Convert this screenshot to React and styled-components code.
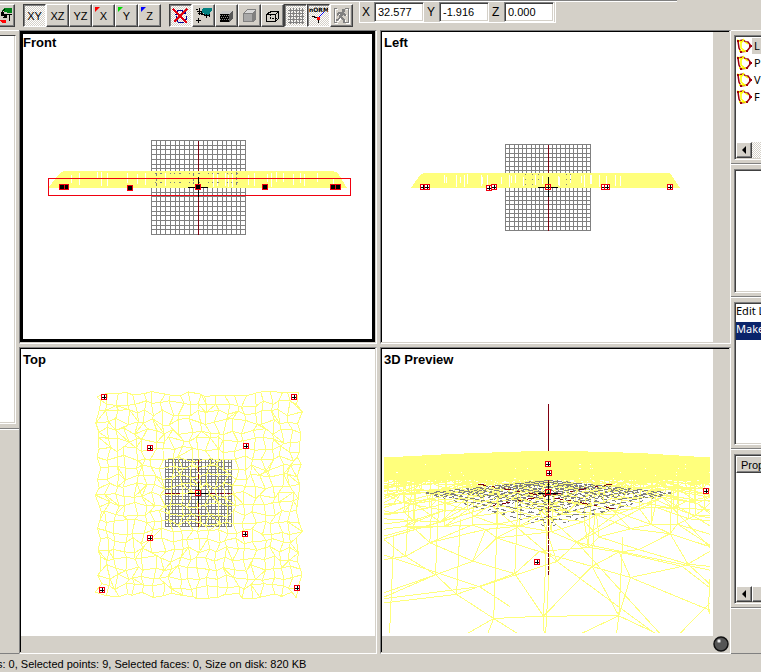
import React from "react";
import styled, { createGlobalStyle, css } from "styled-components";

const FACE = "#d4d0c8";
const DARK = "#808080";
const YELLOW = "#ffff7c";
const RED = "#f00010";
const MAROON = "#800010";
const UI_FONT = `"Noto Sans", "DejaVu Sans Condensed", sans-serif`;

const GlobalStyle = createGlobalStyle`
  * { box-sizing: border-box; }
  html, body, #root { height: 100%; margin: 0; }
  body {
    background: ${FACE};
    color: #000;
    font: 11px/14px "Liberation Sans", Arial, sans-serif;
    overflow: hidden;
  }
  svg { display: block; }
`;

const dither = css`
  background: repeating-conic-gradient(#fff 0 25%, ${FACE} 0 50%) 0 0 / 2px 2px;
`;

const sunken = css`
  border: 1px solid;
  border-color: ${DARK} #fff #fff ${DARK};
  box-shadow: inset 1px 1px 0 #404040, inset -1px -1px 0 ${FACE};
`;

const raised = css`
  border: 1px solid;
  border-color: #fff #404040 #404040 #fff;
  box-shadow: inset -1px -1px 0 ${DARK};
`;

const Window = styled.div`
  height: 100vh;
  display: grid;
  grid-template-rows: 30px minmax(0, 1fr) 18px;
  background: ${FACE};
  overflow: hidden;
`;

const Toolbar = styled.header`
  position: relative;
  display: flex;
  align-items: flex-start;
  min-width: 0;
  overflow: hidden;
  &::before {
    content: "";
    position: absolute;
    inset: 0 11% auto 0;
    height: 2px;
    background: linear-gradient(${DARK} 50%, #fff 50%);
  }
`;

const ToolGroup = styled.div`
  display: flex;
  margin: 4px 8px 0 0;
  flex: none;
`;

const LeadingGroup = styled(ToolGroup)`
  margin-left: -8px;
`;

const ToolButton = styled.button`
  position: relative;
  width: 23px;
  height: 23px;
  padding: 0;
  display: grid;
  place-items: center;
  font: 11px/14px "Liberation Sans", Arial, sans-serif;
  color: #000;
  background: ${FACE};
  ${raised}
  ${(p) =>
    p.$pressed &&
    css`
      ${dither}
      border-color: #404040 #fff #fff #404040;
      box-shadow: inset 1px 1px 0 ${DARK};
    `}
  ${(p) =>
    p.$flag &&
    css`
      &::before {
        content: "";
        position: absolute;
        left: 2px;
        top: 2px;
        width: 5px;
        height: 5px;
        background: ${p.$flag};
        clip-path: polygon(0 0, 100% 0, 0 100%);
      }
    `}
`;

const Coordinates = styled.form`
  display: flex;
  height: 21px;
  margin: 2px 0 0 -2px;
  border-left: 1px solid #fff;
  border-right: 1px solid #fff;
  border-bottom: 1px solid #fff;
`;

const CoordField = styled.div`
  display: flex;
`;

const CoordLabel = styled.label`
  width: 14px;
  padding-left: 2px;
  font: 12px/20px "Liberation Sans", Arial, sans-serif;
`;

const CoordInput = styled.input`
  width: 50px;
  height: 20px;
  margin-right: 1px;
  padding: 0 3px;
  font: 11px/16px "Liberation Sans", Arial, sans-serif;
  color: #000;
  background: #fff;
  border-radius: 0;
  outline: none;
  ${sunken}
`;

const Main = styled.main`
  display: grid;
  grid-template-columns: 19px minmax(0, 1fr) 30px;
  min-height: 0;
`;

const LeftDock = styled.aside`
  display: grid;
  grid-template-rows: 399fr 225fr;
  min-height: 0;
`;

const DockSection = styled.section`
  min-height: 0;
  display: flex;
  flex-direction: column;
  padding: 4px 3px 4px 0;
  border-top: 1px solid #fff;
  border-bottom: 1px solid ${DARK};
`;

const TreeBox = styled.div`
  flex: 1;
  background: #fff;
  border-style: solid;
  border-width: 1px 1px 1px 0;
  border-color: #404040 #fff #fff;
  box-shadow: inset -1px -1px 0 ${FACE};
`;

const Views = styled.div`
  display: grid;
  grid-template-columns: 358fr 351fr;
  grid-template-rows: 314fr 307fr;
  gap: 3px;
  min-width: 0;
  min-height: 0;
`;

const ViewFrame = styled.section`
  min-width: 0;
  min-height: 0;
  border: 1px solid;
  border-color: ${DARK} #fff #fff ${DARK};
`;

const ViewBody = styled.div`
  position: relative;
  height: calc(100% - 1px);
  display: grid;
  grid-template-columns: minmax(0, 1fr) auto;
  grid-template-rows: minmax(0, 1fr) auto;
  background: ${FACE};
  border: solid #000;
  border-width: ${(p) => (p.$active ? "3px" : "1px 0 0 1px")};
  margin-right: 1px;
`;

const ViewTitle = styled.h2`
  position: absolute;
  left: ${(p) => (p.$active ? 0 : 2)}px;
  top: ${(p) => (p.$active ? 1 : 3)}px;
  margin: 0;
  font: bold 13px/16px "Liberation Sans", Arial, sans-serif;
`;

const Canvas = styled.svg`
  grid-area: 1 / 1;
  width: 100%;
  height: 100%;
  min-width: 0;
  min-height: 0;
  background: #fff;
  overflow: hidden;
`;

const SideGutter = styled.div`
  grid-area: 1 / 2;
  width: 16px;
`;

const BottomGutter = styled.div`
  grid-area: 2 / 1;
  height: 16px;
`;

const OrbitButton = styled.button`
  grid-area: 2 / 2;
  width: 16px;
  height: 16px;
  padding: 0;
  border: 0;
  background: none;
`;

const RightDock = styled.aside`
  display: grid;
  grid-template-rows: 134fr 133fr 152fr 159fr 46fr;
  min-height: 0;
  overflow: hidden;
`;

const Panel = styled.section`
  min-width: 0;
  min-height: 0;
  display: flex;
  flex-direction: column;
  padding: 4px 0 3px 3px;
  border-top: 1px solid #fff;
  border-bottom: 1px solid ${DARK};
  overflow: hidden;
`;

const Well = styled.div`
  flex: 1;
  min-height: 0;
  width: 120px;
  display: flex;
  flex-direction: column;
  padding: 1px;
  background: #fff;
  ${sunken}
`;

const List = styled.ul`
  flex: 1;
  margin: 0;
  padding: 0;
  list-style: none;
  font: 11px/17px ${UI_FONT};
`;

const ListItem = styled.li`
  display: flex;
  align-items: center;
  height: 17px;
`;

const ItemText = styled.span`
  padding: 0 2px;
  line-height: 16px;
  background: ${(p) => (p.$selected ? FACE : "transparent")};
`;

const HistoryItem = styled.li`
  height: 18px;
  line-height: 14px;
  color: ${(p) => (p.$selected ? "#fff" : "#000")};
  background: ${(p) => (p.$selected ? "#0a246a" : "transparent")};
`;

const ScrollRow = styled.div`
  display: flex;
  height: 16px;
  ${dither}
`;

const ScrollButton = styled.button`
  width: 16px;
  height: 16px;
  padding: 0;
  display: grid;
  place-items: center;
  background: ${FACE};
  ${raised}
`;

const Thumb = styled.div`
  width: 40px;
  background: ${FACE};
  ${raised}
`;

const ColumnHeader = styled.button`
  flex: none;
  height: 17px;
  padding: 0 4px;
  text-align: left;
  font: 11px/14px "Liberation Sans", Arial, sans-serif;
  background: ${FACE};
  ${raised}
`;

const StatusBar = styled.footer`
  padding: 3px 0 0;
  font: 11px/14px "Liberation Sans", Arial, sans-serif;
  white-space: nowrap;
  display: flex;
  overflow: hidden;
`;

const StatusText = styled.span`
  margin-left: -3px;
`;

/* ---------- geometry ---------- */

function seeded(seed) {
  let s = seed;
  return () => {
    s = (s * 1664525 + 1013904223) % 4294967296;
    return s / 4294967296;
  };
}

function gridPath(x0, y0, x1, y1, n) {
  let d = "";
  for (let i = 0; i <= n; i++) {
    const x = Math.round(x0 + ((x1 - x0) * i) / n) + 0.5;
    const y = Math.round(y0 + ((y1 - y0) * i) / n) + 0.5;
    d += `M${x} ${y0}V${y1 + 1}M${x0} ${y}H${x1 + 1}`;
  }
  return d;
}

function topMesh() {
  const rnd = seeded(17);
  const n = 22;
  const pts = [];
  for (let j = 0; j <= n; j++) {
    const row = [];
    for (let i = 0; i <= n; i++) {
      row.push([
        98.5 + (i * 201) / n + (rnd() - 0.5) * 7,
        394.5 + (j * 201) / n + (rnd() - 0.5) * 7,
      ]);
    }
    pts.push(row);
  }
  let d = "";
  const seg = (a, b) => {
    d += `M${a[0].toFixed(1)} ${a[1].toFixed(1)}L${b[0].toFixed(1)} ${b[1].toFixed(1)}`;
  };
  for (let j = 0; j <= n; j++)
    for (let i = 0; i <= n; i++) {
      if (i < n) seg(pts[j][i], pts[j][i + 1]);
      if (j < n) seg(pts[j][i], pts[j + 1][i]);
      if (i < n && j < n && rnd() < 0.14) seg(pts[j][i], pts[j + 1][i + 1]);
      if (i > 0 && j < n && rnd() < 0.08) seg(pts[j][i], pts[j + 1][i - 1]);
    }
  return d;
}

const CX = 548.5;
const HORIZON = 451;
const FOCAL = 275;
const NEAR = 0.1;

function projectLine(a, b) {
  let [p, q] = a[1] > b[1] ? [a, b] : [b, a];
  if (p[1] < NEAR) return "";
  if (q[1] < NEAR) {
    const t = (p[1] - NEAR) / (p[1] - q[1]);
    q = p.map((v, k) => v + (q[k] - v) * t);
  }
  const s = (v) =>
    `${(CX + (FOCAL * v[0]) / v[1]).toFixed(1)} ${(HORIZON + v[2] / v[1]).toFixed(1)}`;
  return `M${s(p)}L${s(q)}`;
}

function perspectiveMesh() {
  const rnd = seeded(5);
  const n = 25;
  const half = 0.316 * 3.05;
  const layer = (k, wobble) => {
    const pts = [];
    for (let j = 0; j <= n; j++) {
      const row = [];
      for (let i = 0; i <= n; i++) {
        const u = -half + (2 * half * i) / n + (rnd() - 0.5) * 0.05;
        const v = -half + (2 * half * j) / n + (rnd() - 0.5) * 0.05;
        row.push([(u - v) * 0.707, 1 + (u + v) * 0.707, k + (rnd() - 0.5) * wobble]);
      }
      pts.push(row);
    }
    return pts;
  };
  const low = layer(42, 6);
  const high = layer(18, 14);
  let d = "";
  for (let j = 0; j <= n; j++)
    for (let i = 0; i <= n; i++) {
      for (const L of [low, high]) {
        if (i < n) d += projectLine(L[j][i], L[j][i + 1]);
        if (j < n) d += projectLine(L[j][i], L[j + 1][i]);
        if (i < n && j < n && rnd() < 0.45) d += projectLine(L[j][i], L[j + 1][i + 1]);
      }
      const base = low[j][i];
      if (base[1] > 0.18 && rnd() < 0.75)
        d += projectLine(base, [base[0] + 0.004, base[1] + 0.001, high[j][i][2]]);
    }
  return d;
}

function perspectiveGrid() {
  let d = "";
  const h = 0.316;
  for (let i = 0; i <= 20; i++) {
    const t = -h + (2 * h * i) / 20;
    const at = (u, v) => [(u - v) * 0.707, 1 + (u + v) * 0.707, 42];
    d += projectLine(at(t, -h), at(t, h)) + projectLine(at(-h, t), at(h, t));
  }
  return d;
}

function slits(seed, x0, x1, y0, y1, count) {
  const rnd = seeded(seed);
  let d = "";
  for (let i = 0; i < count; i++) {
    const x = Math.round(x0 + rnd() * (x1 - x0)) + 0.5;
    const a = Math.round(y0 + rnd() * 3);
    d += `M${x} ${a}V${Math.round(y1 - rnd() * 5)}`;
  }
  return d;
}

const TOP_MESH = topMesh();
const PERSPECTIVE_MESH = perspectiveMesh();
const PERSPECTIVE_GRID = perspectiveGrid();

function Marker({ x, y, solid, bare }) {
  return (
    <g>
      <rect x={x - 2.5} y={y - 2.5} width="5" height="5" fill={solid ? "#000" : bare ? "none" : "#fff"} stroke={RED} />
      {!solid && !bare && <path d={`M${x - 2} ${y + 0.5}H${x + 2}M${x + 0.5} ${y - 2}V${y + 2}`} stroke="#000" />}
    </g>
  );
}

function Cross({ x, y }) {
  return <path d={`M${x - 10} ${y + 0.5}H${x + 10}M${x + 0.5} ${y - 10}V${y + 10}`} stroke="#000" />;
}

function FrontScene() {
  return (
    <Canvas viewBox="23 34 349 305" shapeRendering="crispEdges" fill="none">
      <path d={gridPath(151, 140, 245, 234, 20)} stroke={DARK} />
      <path d="M198.500 141V235" stroke={MAROON} />
      <path d="M48 188L60 173L64 171H333L338 173L347 188Z" fill={YELLOW} />
      <path d="M71.500 175V183M79.500 173V185M97.500 172V179M101.500 172V186M107.500 173V186M127.500 173V183M137.500 174V184M145.500 173V185M165.500 173V186M213.500 173V187M217.500 174V186M225.500 173V186M228.500 175V187M232.500 174V187M248.500 175V185M254.500 173V186M267.500 174V182M271.500 173V187M276.500 172V182M283.500 173V182M293.500 174V185M300.500 173V183M304.500 174V186M317.500 173V182M333.500 179V184" stroke="#fff" />
      <path d="M156.500 173V196M193.500 173V184M236.500 172V186" stroke={DARK} strokeDasharray="3 2" />
      <path d="M155 173.500H244M155 182.500H244" stroke={DARK} strokeDasharray="1 4 2 8 1 3" />
      <rect x="48.500" y="178.500" width="302" height="17" stroke={RED} />
      <Cross x={198} y={187} />
      {[66, 62, 130, 198, 265, 333, 338].map((x) => (
        <Marker key={x} x={x} y={x === 130 ? 188 : 187} solid />
      ))}
    </Canvas>
  );
}

function LeftScene() {
  return (
    <Canvas viewBox="382 32 331 310" shapeRendering="crispEdges" fill="none">
      <path d={gridPath(505, 144, 590, 230, 20)} stroke={DARK} />
      <path d="M548.500 145V231" stroke={MAROON} />
      <path d="M411 188L420 175L424 173H670L680 188Z" fill={YELLOW} />
      <path d={slits(21, 430, 665, 174, 187, 30)} stroke="#fff" />
      <path d="M525.500 174V186M532.500 174V186M538.500 174V180M566.500 174V186M570.500 174V180" stroke={DARK} strokeDasharray="1 4" />
      <Cross x={548} y={187} />
      {[[423, 187], [427, 187], [489, 188], [494, 187], [604, 187], [607, 187], [670, 187]].map(([x, y]) => (
        <Marker key={x} x={x} y={y} />
      ))}
      <Marker x={548} y={187} bare />
    </Canvas>
  );
}

function TopScene() {
  return (
    <Canvas viewBox="21 349 354 287" shapeRendering="crispEdges" fill="none">
      <path d={gridPath(165, 459, 231, 526, 20)} stroke={DARK} />
      <path d="M165 493.500H232" stroke={MAROON} strokeDasharray="6 1 3 1" />
      <path d={TOP_MESH} stroke={YELLOW} />
      <path d="M198.500 460V527" stroke={MAROON} strokeDasharray="5 2" />
      <Cross x={198} y={493} />
      {[[104, 397], [294, 397], [150, 448], [246, 446], [150, 538], [245, 534], [102, 590], [297, 588]].map(([x, y]) => (
        <Marker key={`${x}-${y}`} x={x} y={y} />
      ))}
      <Marker x={198} y={493} bare />
    </Canvas>
  );
}

function PreviewScene() {
  return (
    <Canvas viewBox="382 349 331 287" shapeRendering="crispEdges" fill="none">
      <defs>
        <clipPath id="frustum">
          <rect x="384" y="380" width="326" height="253" />
        </clipPath>
      </defs>
      <path d="M548.500 404V452" stroke={MAROON} />
      <g clipPath="url(#frustum)">
        <path d="M384 457.500L450 454L535 451H570L640 453L710 457.500V480H384Z" fill={YELLOW} />
        <path d="M384 464.500H710M384 468.500H710M384 472.500H710M384 475.500H710M384 478.500H710" stroke="#fff" strokeDasharray="2 9 4 17 3 6 1 23" />
        <path d={PERSPECTIVE_MESH} stroke={YELLOW} />
      </g>
      <path d={PERSPECTIVE_GRID} stroke={DARK} strokeDasharray="3 6 5 4 2 9 4 7" />
      <path d="M478 484L620 510M612 484L484 507" stroke={MAROON} strokeDasharray="8 6 3 9" />
      <path d="M548.500 480V575" stroke={MAROON} strokeDasharray="7 1 4 1" />
      <Cross x={548} y={493} />
      <Marker x={548} y={464} />
      <Marker x={549} y={473} />
      <Marker x={706} y={491} />
      <Marker x={537} y={562} />
      <Marker x={548} y={492} bare />
    </Canvas>
  );
}

/* ---------- icons ---------- */

const Icon = styled.svg`
  width: 19px;
  height: 19px;
  shape-rendering: crispEdges;
  fill: none;
`;

const NormText = styled.text`
  font: bold 6px "DejaVu Sans", sans-serif;
  fill: #000;
`;

const icons = {
  material: (
    <Icon viewBox="0 0 19 19">
      <path d="M10 2H18V7H14L8 5Z" fill="#008018" />
      <path d="M7 7L11 3M9 8H13M15.500 8V15M13 8.500H18M9 11.500H13" stroke="#000" strokeWidth="1" />
      <path d="M7 6H10V9H13V12H10V10H7Z" fill="#000" />
      <path d="M6 14H12V17H8Z" fill="#f00" />
    </Icon>
  ),
  noRotate: (
    <Icon viewBox="0 0 19 19">
      <path d="M6.500 8V4.500H11L13 7M5.500 10V14L7.500 16.500H12.500L15.500 13V10M4 8.500H8M11 7.500H14.500V4" stroke="#000098" />
      <path d="M2 3L16 17M16 3L3 16" stroke="#e00010" strokeWidth="2" />
    </Icon>
  ),
  camera: (
    <Icon viewBox="0 0 19 19">
      <path d="M9 2H18V4L14 10L7 6Z" fill="#008080" />
      <path d="M2 3.500H4M3 5.500H8M4 7.500H7M5.500 2V9M10 9.500H16M12.500 8V12M15.500 8V11M2 14.500H7M4.500 12V17" stroke="#000" />
      <path d="M7 6L12 9L11 10L6 8Z" fill="#000" />
    </Icon>
  ),
  textured: (
    <Icon viewBox="0 0 19 19">
      <path d="M3 7L6 5H16L13 8H3Z" fill="#c8c8c8" />
      <path d="M3 8H12V16H3Z" fill="#000" />
      <path d="M12 8L16 5V13L12 16Z" fill="#585858" />
      <path d="M3 9.500H12M4 11.500H12M3 13.500H12" stroke="#888" strokeDasharray="1 1" />
    </Icon>
  ),
  shaded: (
    <Icon viewBox="0 0 19 19">
      <path d="M3 7L7 3H16V13L13 16H3Z" fill="#808080" />
      <path d="M4 7L7 4H15L12 7Z" fill="#d8d8d8" />
      <path d="M4 8H12V15H4Z" fill="#a8a8a8" />
    </Icon>
  ),
  wire: (
    <Icon viewBox="0 0 19 19">
      <path d="M3.500 8.500H12.500V15.500H3.500ZM7.500 5.500H15.500V12.500L12.500 15.500M3.500 8.500L7.500 5.500M12.500 8.500L15.500 5.500" stroke="#000" />
      <path d="M7.500 5V12.500H15" stroke="#000" strokeDasharray="2 1" />
    </Icon>
  ),
  grid: (
    <Icon viewBox="0 0 19 19">
      <path d="M4.500 2V18M7.500 2V18M10.500 2V18M13.500 2V18M16.500 2V18M2 4.500H18M2 7.500H18M2 10.500H18M2 13.500H18M2 16.500H18" stroke="#808080" />
    </Icon>
  ),
  normals: (
    <Icon viewBox="0 0 19 19">
      <NormText x="0" y="6" aria-hidden="true">nORM</NormText>
      <path d="M9 12L15 6" stroke="#0000f0" />
      <path d="M8 12L3 10M9.500 13V17" stroke="#000" />
      <path d="M8 11H11V14H8Z" fill="#f00" />
    </Icon>
  ),
  run: (
    <Icon viewBox="0 0 19 19">
      <path d="M6 3.500H3.500V17.500H6M14 3.500H17.500V17.500H14M12 4V6M6 8H12L15 10M11 8L9 12L13 14V17M9 12L7 15H5" stroke="#fff" />
      <path d="M5 2.500H2.500V16.500H5M13 2.500H16.500V16.500H13" stroke="#808080" />
      <path d="M10 3H13V6H10ZM6 6H11L14 9V10H12L11 9L10 11L13 13V17H11V14L8 12L6 15H4V13H6L8 8H7L5 10V8Z" fill="#808080" />
    </Icon>
  ),
};

const ShapeIcon = styled.svg`
  flex: none;
  width: 16px;
  height: 16px;
  fill: none;
`;

function PolygonIcon() {
  return (
    <ShapeIcon viewBox="0 0 16 16">
      <path d="M2 3L7 2L10 4H12L15 8L11 13L5 14L3 10Z" fill="#fff" stroke="#a00010" strokeWidth="1.500" />
      <path d="M1 2L5 4M8 1L5 5V10L10 14M3 13H8M9 4L12 6" stroke="#ff0" strokeWidth="1.500" />
      <path d="M1 2H3V4H1ZM13 7H16V9H13ZM10 12H12V14H10ZM4 13H6V15H4Z" fill="#a00010" />
    </ShapeIcon>
  );
}

const Arrow = () => (
  <svg width="6" height="8" viewBox="0 0 6 8">
    <path d="M5 0V8L1 4Z" fill="#000" />
  </svg>
);

function Ball() {
  return (
    <svg width="16" height="16" viewBox="0 0 16 16">
      <circle cx="8" cy="8" r="7" fill="#555" stroke="#111" strokeWidth="1.500" />
      <circle cx="6" cy="5" r="2" fill="#aaa" />
      <circle cx="6" cy="5" r="1" fill="#fff" />
    </svg>
  );
}

/* ---------- page ---------- */

const axisButtons = [
  { label: "XY", pressed: true },
  { label: "XZ" },
  { label: "YZ" },
  { label: "X", flag: "#f00" },
  { label: "Y", flag: "#0d0" },
  { label: "Z", flag: "#00f" },
];

const viewButtons = [
  { icon: "noRotate", name: "Disable rotation", pressed: true },
  { icon: "camera", name: "Camera" },
  { icon: "textured", name: "Textured" },
  { icon: "shaded", name: "Shaded" },
  { icon: "wire", name: "Wireframe" },
  { icon: "grid", name: "Grid", pressed: true },
  { icon: "normals", name: "Normals", pressed: true },
  { icon: "run", name: "Animate" },
];

const coords = [
  ["X", "32.577"],
  ["Y", "-1.916"],
  ["Z", "0.000"],
];

function View({ title, active, side, bottom, corner, children }) {
  return (
    <ViewFrame>
      <ViewBody $active={active}>
        {children}
        {side && <SideGutter />}
        {bottom && <BottomGutter />}
        {corner && (
          <OrbitButton aria-label="Orbit">
            <Ball />
          </OrbitButton>
        )}
        <ViewTitle $active={active}>{title}</ViewTitle>
      </ViewBody>
    </ViewFrame>
  );
}

export default function App() {
  return (
    <Window>
      <GlobalStyle />
      <Toolbar>
        <LeadingGroup>
          <ToolButton aria-label="Material">{icons.material}</ToolButton>
        </LeadingGroup>
        <ToolGroup>
          {axisButtons.map((b) => (
            <ToolButton key={b.label} $pressed={b.pressed} $flag={b.flag}>
              {b.label}
            </ToolButton>
          ))}
        </ToolGroup>
        <ToolGroup>
          {viewButtons.map((b) => (
            <ToolButton key={b.icon} $pressed={b.pressed} aria-label={b.name}>
              {icons[b.icon]}
            </ToolButton>
          ))}
        </ToolGroup>
        <Coordinates>
          {coords.map(([axis, value]) => (
            <CoordField key={axis}>
              <CoordLabel htmlFor={`coord-${axis}`}>{axis}</CoordLabel>
              <CoordInput id={`coord-${axis}`} defaultValue={value} />
            </CoordField>
          ))}
        </Coordinates>
      </Toolbar>
      <Main>
        <LeftDock>
          <DockSection>
            <TreeBox />
          </DockSection>
          <DockSection />
        </LeftDock>
        <Views>
          <View title="Front" active>
            <FrontScene />
          </View>
          <View title="Left" side>
            <LeftScene />
          </View>
          <View title="Top" bottom>
            <TopScene />
          </View>
          <View title="3D Preview" side bottom corner>
            <PreviewScene />
          </View>
        </Views>
        <RightDock>
          <Panel>
            <Well>
              <List>
                {["L", "P", "V", "F"].map((t, i) => (
                  <ListItem key={t}>
                    <PolygonIcon />
                    <ItemText $selected={i === 0}>{t}</ItemText>
                  </ListItem>
                ))}
              </List>
              <ScrollRow>
                <ScrollButton aria-label="Scroll left">
                  <Arrow />
                </ScrollButton>
              </ScrollRow>
            </Well>
          </Panel>
          <Panel>
            <Well />
          </Panel>
          <Panel>
            <Well>
              <List>
                <HistoryItem>Edit L</HistoryItem>
                <HistoryItem $selected>Make</HistoryItem>
              </List>
            </Well>
          </Panel>
          <Panel>
            <Well>
              <ColumnHeader>Prop</ColumnHeader>
              <List />
              <ScrollRow>
                <ScrollButton aria-label="Scroll left">
                  <Arrow />
                </ScrollButton>
                <Thumb />
              </ScrollRow>
            </Well>
          </Panel>
          <Panel />
        </RightDock>
      </Main>
      <StatusBar>
        <StatusText>s: 0, Selected points: 9, Selected faces: 0, Size on disk: 820 KB</StatusText>
      </StatusBar>
    </Window>
  );
}
